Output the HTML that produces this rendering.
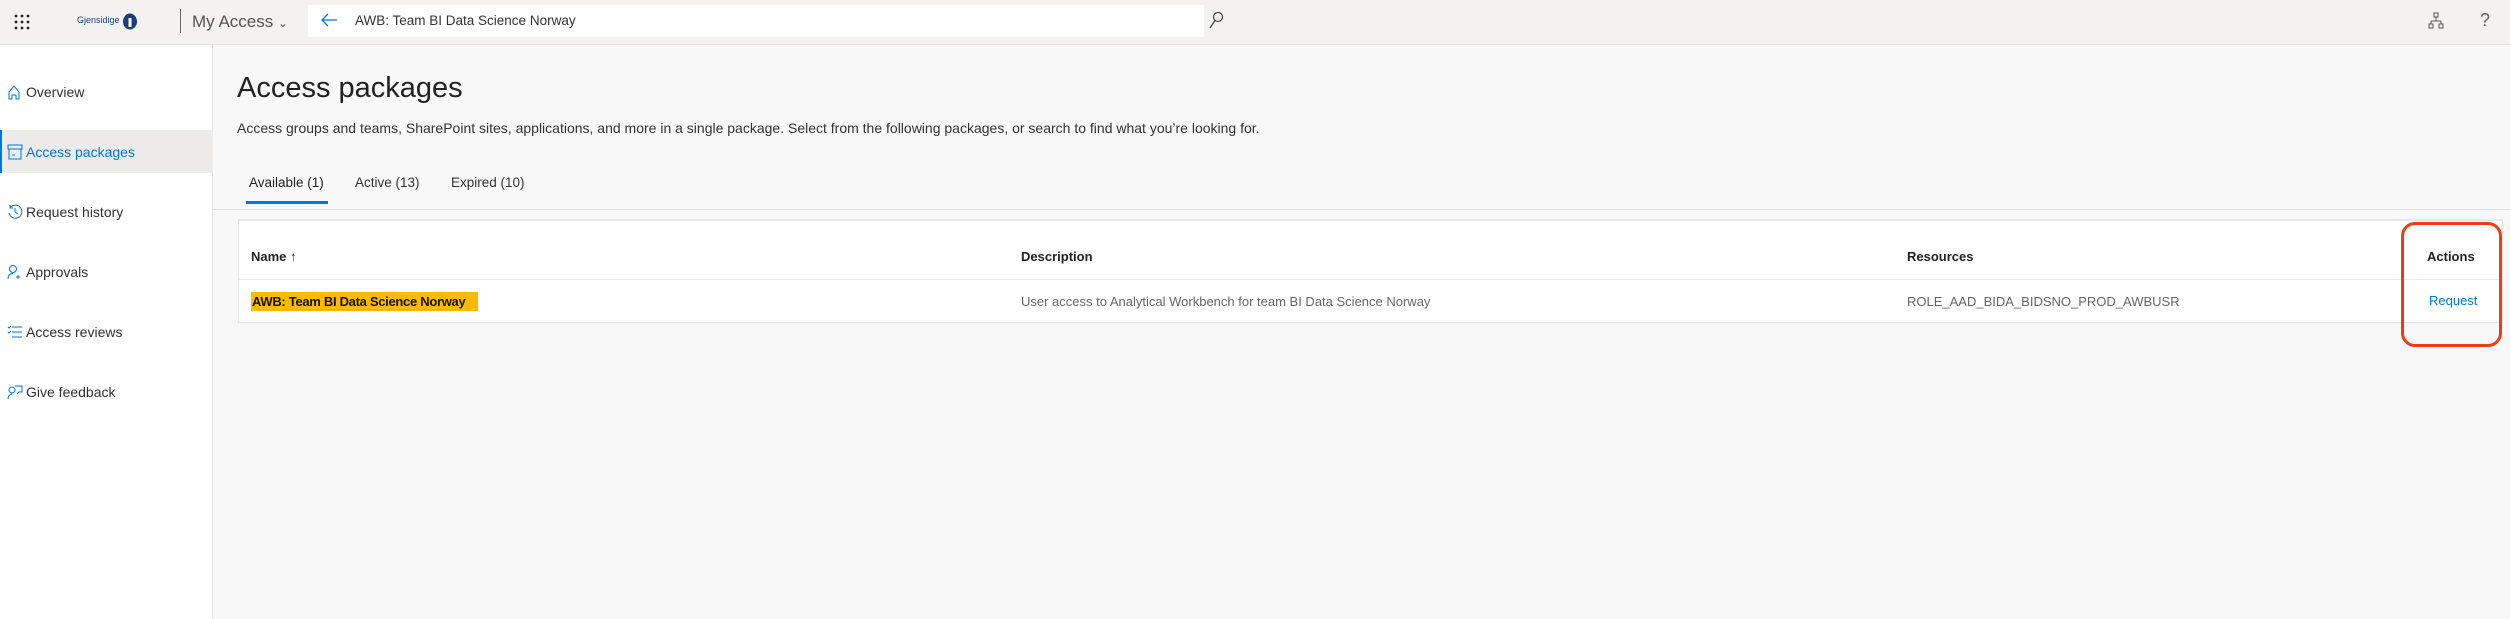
<!DOCTYPE html>
<html><head><meta charset="utf-8"><style>
*{box-sizing:border-box;margin:0;padding:0}
body{width:2510px;height:619px;overflow:hidden;background:#f8f8f8;font-family:"Liberation Sans",sans-serif;color:#323130;position:relative}
.top{position:absolute;left:0;top:0;width:2510px;height:45px;background:#f3f2f1;border-bottom:1px solid #e6e6e6}
.side{position:absolute;left:0;top:45px;width:213px;height:574px;background:#fff;border-right:1px solid #e4e4e4}
.nav{position:absolute;left:0;width:213px;height:43px;font-size:14px;line-height:43px;padding-left:26px;color:#323130}
.nav svg{position:absolute;left:7px;top:13px}
.abs{position:absolute;white-space:nowrap}
</style></head><body>
<div class="top">
 <svg class="abs" style="left:14px;top:14px" width="16" height="16"><g fill="#222"><circle cx="2" cy="2" r="1.4"/><circle cx="8" cy="2" r="1.4"/><circle cx="14" cy="2" r="1.4"/><circle cx="2" cy="8" r="1.4"/><circle cx="8" cy="8" r="1.4"/><circle cx="14" cy="8" r="1.4"/><circle cx="2" cy="14" r="1.4"/><circle cx="8" cy="14" r="1.4"/><circle cx="14" cy="14" r="1.4"/></g></svg>
 <div class="abs" style="left:77px;top:15px;font-size:9px;color:#1b3f7a">Gjensidige</div>
 <svg class="abs" style="left:122px;top:13px" width="16" height="17"><ellipse cx="8" cy="8.5" rx="7" ry="8" fill="#1b3f7a"/><rect x="6.5" y="5" width="3" height="9" fill="#fff"/></svg>
 <div class="abs" style="left:180px;top:9px;width:1px;height:24px;background:#666"></div>
 <div class="abs" style="left:192px;top:12px;font-size:17px;color:#555">My Access <span style="font-size:12px">&#8964;</span></div>
 <div class="abs" style="left:308px;top:5px;width:896px;height:32px;background:#fff"></div>
 <svg class="abs" style="left:320px;top:13px" width="18" height="14"><path d="M8 1L2 7l6 6M2 7h15" stroke="#0078d4" stroke-width="1.3" fill="none"/></svg>
 <div class="abs" style="left:355px;top:13px;font-size:13.5px;color:#333">AWB: Team BI Data Science Norway</div>
 <svg class="abs" style="left:1208px;top:11px" width="16" height="20"><circle cx="10" cy="6" r="4.5" stroke="#444" stroke-width="1.2" fill="none"/><path d="M7 9.5L2 17" stroke="#444" stroke-width="1.3"/></svg>
 <svg class="abs" style="left:2428px;top:12px" width="16" height="18"><g stroke="#555" fill="none" stroke-width="1"><rect x="6" y="1" width="4" height="4"/><path d="M8 5v4M3 9h10M3 9v3M13 9v3"/><rect x="1" y="12" width="4" height="4"/><rect x="11" y="12" width="4" height="4"/></g></svg>
 <div class="abs" style="left:2480px;top:10px;font-size:18px;color:#666">?</div>
</div>
<div class="side">
 <div style="position:absolute;left:0;top:85px;width:213px;height:43px;background:#edebe9;border-left:2px solid #0078d4"></div>
 <div class="nav" style="top:26px"><svg width="14" height="16"><path d="M2 8L7 2l5 6v7H9v-4H5v4H2z" stroke="#0078d4" fill="none"/></svg>Overview</div>
 <div class="nav" style="top:86px;color:#0078d4"><svg width="16" height="16"><rect x="1" y="1" width="14" height="4" stroke="#0078d4" fill="none"/><rect x="2" y="5" width="12" height="10" stroke="#0078d4" fill="none"/><path d="M5 11h3" stroke="#0078d4"/></svg>Access packages</div>
 <div class="nav" style="top:146px"><svg width="16" height="16"><path d="M3 4a6.5 6.5 0 1 1-1 5M3 1v3h3M8 4v4l3 2" stroke="#0078d4" fill="none"/></svg>Request history</div>
 <div class="nav" style="top:206px"><svg width="14" height="16"><circle cx="6" cy="5" r="3.5" stroke="#0078d4" fill="none"/><path d="M1 15c0-4 2-5.5 5-5.5M11 11v4M9 13h4" stroke="#0078d4" fill="none"/></svg>Approvals</div>
 <div class="nav" style="top:266px"><svg width="16" height="16"><path d="M5 3h10M5 8h10M5 13h10M1 3l1 1 2-2M1 8l1 1 2-2" stroke="#0078d4" fill="none"/></svg>Access reviews</div>
 <div class="nav" style="top:326px"><svg width="16" height="16"><circle cx="5" cy="6" r="3" stroke="#0078d4" fill="none"/><path d="M1 15c0-3 2-5 4-5M8 2h7v6h-3l-2 2" stroke="#0078d4" fill="none"/></svg>Give feedback</div>
</div>
<div class="abs" style="left:237px;top:72px;font-size:29px;color:#222">Access packages</div>
<div class="abs" style="left:237px;top:120px;font-size:14px;color:#333">Access groups and teams, SharePoint sites, applications, and more in a single package. Select from the following packages, or search to find what you’re looking for.</div>
<div class="abs" style="left:249px;top:175px;font-size:13.5px;color:#222">Available (1)</div>
<div class="abs" style="left:355px;top:175px;font-size:13.5px;color:#333">Active (13)</div>
<div class="abs" style="left:451px;top:175px;font-size:13.5px;color:#333">Expired (10)</div>
<div class="abs" style="left:246px;top:201px;width:82px;height:3px;background:#0078d4"></div>
<div class="abs" style="left:213px;top:209px;width:2297px;height:1px;background:#e1e1e1"></div>
<div class="abs" style="left:238px;top:219px;width:2265px;height:104px;background:#fff;border:1px solid #e6e6e6;border-top:2px solid #e8e8e8"></div>
<div class="abs" style="left:239px;top:279px;width:2263px;height:1px;background:#ececec"></div>
<div class="abs" style="left:251px;top:249px;font-size:13px;color:#222;font-weight:bold">Name <span style="font-weight:normal">&#8593;</span></div>
<div class="abs" style="left:1021px;top:249px;font-size:13px;color:#222;font-weight:bold">Description</div>
<div class="abs" style="left:1907px;top:249px;font-size:13px;color:#222;font-weight:bold">Resources</div>
<div class="abs" style="left:2427px;top:249px;font-size:13px;color:#222;font-weight:bold">Actions</div>
<div class="abs" style="left:251px;top:292px;width:227px;height:19px;background:#ffb900"></div>
<div class="abs" style="left:252px;top:294px;font-size:13px;color:#111;font-weight:bold;letter-spacing:-0.3px">AWB: Team BI Data Science Norway</div>
<div class="abs" style="left:1021px;top:294px;font-size:13px;color:#666">User access to Analytical Workbench for team BI Data Science Norway</div>
<div class="abs" style="left:1907px;top:294px;font-size:13px;color:#666">ROLE_AAD_BIDA_BIDSNO_PROD_AWBUSR</div>
<div class="abs" style="left:2429px;top:293px;font-size:13px;color:#0078d4">Request</div>
<div class="abs" style="left:2401px;top:222px;width:101px;height:125px;border:3px solid #f03c12;border-radius:14px"></div>
</body></html>
